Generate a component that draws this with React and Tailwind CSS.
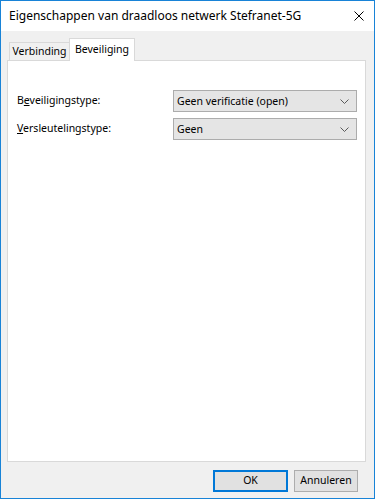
import React from "react";

const font = { fontFamily: '"Noto Sans", "Segoe UI", sans-serif' };

function Chevron() {
  return (
    <svg width="9" height="5" viewBox="0 0 9 5" className="shrink-0">
      <path d="M0.5 0.5 L4.5 4.5 L8.5 0.5" fill="none" stroke="#5a5a5a" strokeWidth="1" />
    </svg>
  );
}

function Combo({ value }) {
  return (
    <div className="flex h-[22px] w-[184px] items-center justify-between border border-[#acacac] bg-[#e5e5e5] pl-[3px] pr-[7px] text-[10.5px] text-black">
      <span className="leading-none">{value}</span>
      <Chevron />
    </div>
  );
}

export default function App() {
  return (
    <div
      className="flex h-[499px] w-[375px] flex-col border border-[#1883d7] bg-[#f0f0f0] text-black"
      style={font}
    >
      <div className="flex h-[30px] shrink-0 items-center justify-between bg-white pl-[8px] pr-[10px]">
        <span className="text-[12px] leading-none">Eigenschappen van draadloos netwerk Stefranet-5G</span>
        <svg width="10" height="10" viewBox="0 0 10 10">
          <path d="M0.5 0.5 L9.5 9.5 M9.5 0.5 L0.5 9.5" stroke="#000" strokeWidth="1" />
        </svg>
      </div>
      <div className="flex flex-1 flex-col pl-[6px] pt-[7px]">
        <div className="flex items-end pl-[2px]">
          <div className="flex h-[18px] w-[61px] items-center justify-center border border-b-0 border-[#d9d9d9] bg-[#f0f0f0] text-[10.5px]">
            Verbinding
          </div>
          <div className="relative z-10 -mb-px -ml-px flex h-[23px] w-[66px] items-start justify-center border border-b-0 border-[#d9d9d9] bg-white pt-[3px] text-[10.5px]">
            Beveiliging
          </div>
        </div>
        <div className="flex h-[402px] w-[359px] flex-col gap-[6px] border border-[#d9d9d9] bg-white pl-[9px] pt-[29px]">
          <div className="flex items-center">
            <span className="w-[156px] text-[10.5px]">
              B<span className="underline">e</span>veiligingstype:
            </span>
            <Combo value="Geen verificatie (open)" />
          </div>
          <div className="flex items-center">
            <span className="w-[156px] text-[10.5px]">
              <span className="underline">V</span>ersleutelingstype:
            </span>
            <Combo value="Geen" />
          </div>
        </div>
        <div className="mt-[8px] flex justify-end gap-[6px] pr-[16px]">
          <button className="flex h-[22px] w-[75px] items-center justify-center border-2 border-[#0078d7] bg-[#e1e1e1] text-[10.5px]">
            OK
          </button>
          <button className="flex h-[22px] w-[64px] items-center justify-center border border-[#adadad] bg-[#e1e1e1] text-[10.5px]">
            Annuleren
          </button>
        </div>
      </div>
    </div>
  );
}
